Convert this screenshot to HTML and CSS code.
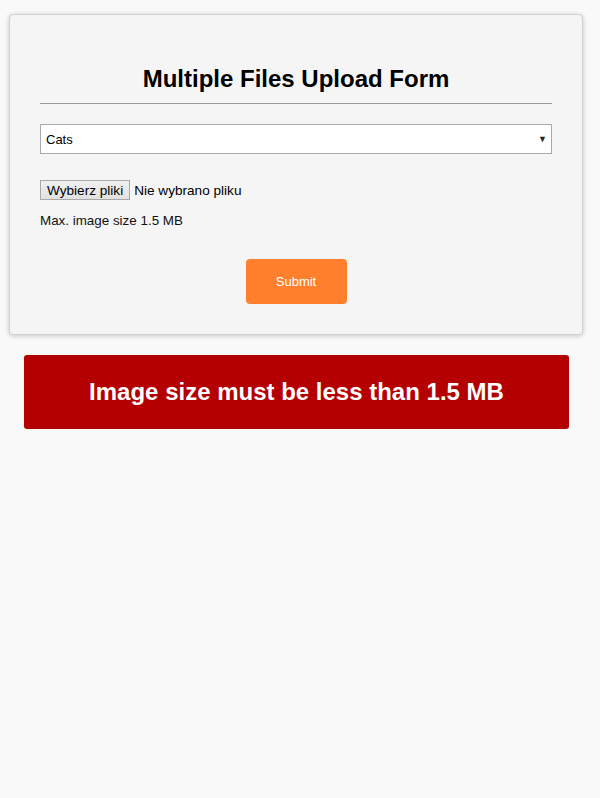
FILE: index.html
```html
<!DOCTYPE html>
<html>
<head>
<meta charset="utf-8">
<link rel="stylesheet" href="styles.css">
</head>
<body>
<div class="card">
  <h1 class="title">Multiple Files Upload Form</h1>
  <hr class="rule">
  <div class="select">
    <span>Cats</span>
    <span class="arrow">▼</span>
  </div>
  <div class="file-row">
    <span class="file-btn">Wybierz pliki</span>
    <span class="file-note">Nie wybrano pliku</span>
  </div>
  <p class="hint">Max. image size 1.5 MB</p>
  <div class="actions">
    <button class="submit">Submit</button>
  </div>
</div>
<div class="error">Image size must be less than 1.5 MB</div>
</body>
</html>
```

FILE: styles.css
```css
html, body {
  margin: 0;
  padding: 0;
  background: #f9f9f9;
  font-family: "Liberation Sans", Arial, sans-serif;
}
body {
  padding: 14px 17px 0 9px;
}
.card {
  width: 574px;
  box-sizing: border-box;
  background: #f5f5f5;
  border: 1px solid #cfcfcf;
  border-radius: 4px;
  box-shadow: 0 1px 5px rgba(0,0,0,0.2);
  padding: 48px 30px 30px 30px;
}
.title {
  margin: 0;
  text-align: center;
  font-size: 24px;
  font-weight: bold;
  color: #000;
  line-height: 32px;
}
.rule {
  margin: 8px 0 20px 0;
  border: 0;
  border-top: 1px solid #999;
  height: 0;
}
.select {
  height: 30px;
  box-sizing: border-box;
  background: #fff;
  border: 1px solid #a9a9a9;
  display: flex;
  align-items: center;
  justify-content: space-between;
  padding: 0 4px 0 5px;
  font-size: 13px;
  color: #000;
}
.arrow {
  font-size: 9px;
  color: #222;
}
.file-row {
  margin-top: 26px;
  display: flex;
  align-items: center;
  font-size: 13.6px;
  color: #000;
}
.file-btn {
  background: linear-gradient(#f0f0f0, #e1e1e1);
  border: 1px solid #a9a9a9;
  padding: 1px 6px;
  height: 20px;
  box-sizing: border-box;
  line-height: 17px;
  margin-right: 4px;
}
.hint {
  margin: 13px 0 0 0;
  font-size: 13.4px;
  color: #111;
}
.actions {
  display: flex;
  justify-content: center;
  margin-top: 31px;
}
.submit {
  width: 101px;
  height: 45px;
  background: #ff7f2c;
  border: 0;
  border-radius: 4px;
  color: #fff;
  font-family: "Liberation Sans", Arial, sans-serif;
  font-size: 13px;
}
.error {
  margin: 20px 0 0 15px;
  width: 545px;
  height: 74px;
  box-sizing: border-box;
  background: #b40000;
  border-radius: 3px;
  color: #fff;
  font-weight: bold;
  font-size: 24px;
  display: flex;
  align-items: center;
  justify-content: center;
}
```
